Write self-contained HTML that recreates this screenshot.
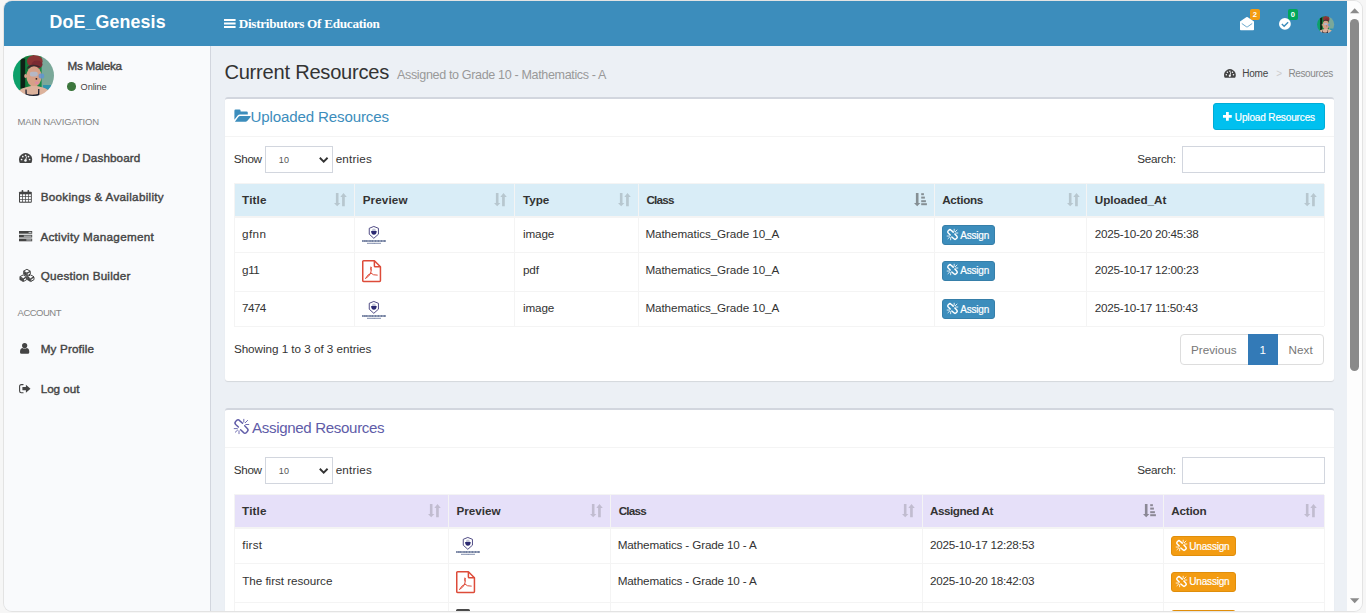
<!DOCTYPE html>
<html lang="en"><head><meta charset="utf-8"><title>DoE_Genesis | Resources</title>
<style>
html,body{margin:0;padding:0;}
body{width:1366px;height:613px;overflow:hidden;background:#f6f6f6;font-family:"Liberation Sans",sans-serif;position:relative;}
#frame{position:absolute;left:0;top:0;width:1366px;height:613px;clip-path:inset(1px 4px 2px 4px round 8px);background:#ecf0f5;}
.a{position:absolute;}
.t{position:absolute;white-space:pre;}
#hdr{left:4px;top:1px;width:1343px;height:45px;background:#3c8dbc;}
#side{left:4px;top:46px;width:206px;height:567px;background:#f9fafc;border-right:1px solid #d2d6de;}
#sbar{left:1347px;top:0;width:16px;height:613px;background:#fdfdfd;}
#edge{left:3px;top:0px;width:1360px;height:612px;border-radius:9px;background:#e3e3e3;}
.box{left:225px;width:1109px;background:#fff;border-top:2.7px solid #d2d6de;border-radius:3px;box-shadow:0 1px 1px rgba(0,0,0,.1);box-sizing:border-box;}
.hl{left:225px;width:1109px;height:1px;background:#f4f4f4;}
.inp{background:#fff;border:1px solid #d2d6de;box-sizing:border-box;}
.th{height:32px;}
.vl{width:1px;background:#f4f4f4;}
.rl{left:234.4px;width:1090px;height:1px;background:#f4f4f4;}
.btn{border-radius:3px;box-sizing:border-box;}
svg{position:absolute;overflow:visible;}
</style></head><body>
<div id="edge" class="a"></div>
<div id="frame">
<div id="hdr" class="a"></div>
<div id="side" class="a"></div>
<div id="sbar" class="a"></div>
<svg class="a" style="left:13.1px;top:54.9px" width="41" height="41" viewBox="0 0 41 41">
<defs><clipPath id="av1"><circle cx="20.5" cy="20.5" r="20.5"/></clipPath><filter id="av1b" x="-10%" y="-10%" width="120%" height="120%"><feGaussianBlur stdDeviation=".55"/></filter></defs>
<g clip-path="url(#av1)"><g filter="url(#av1b)">
<rect x="-2" y="-2" width="45" height="45" fill="#178a45"/>
<rect x="-2" y="-2" width="9" height="45" fill="#0fa06a"/>
<rect x="7.6" y="3.5" width="4.8" height="30" fill="#0b2417"/>
<rect x="12.4" y="-2" width="3" height="36" fill="#127a3a"/>
<rect x="28.6" y="-2" width="15" height="45" fill="#7aa899"/>
<rect x="30" y="30" width="8" height="4.5" fill="#2d93ad"/>
<ellipse cx="21.8" cy="6.2" rx="7.8" ry="6.2" fill="#8b3536"/>
<ellipse cx="24" cy="9.5" rx="5.5" ry="4" fill="#7a2c30"/>
<path d="M13.5 15 Q14 9.5 21 9.8 Q28 10 29 15 L28 12.5 Q21 10.8 14.5 13.5 Z" fill="#3b2a2e"/>
<ellipse cx="21" cy="21.5" rx="7.6" ry="10.3" fill="#d6a087"/>
<ellipse cx="12.6" cy="21" rx="1.4" ry="2" fill="#d9a58c"/>
<path d="M3 43 Q4 33.5 13 32.2 L18 31 L24 31 L30 32.4 Q37 34 38.5 43 Z" fill="#dcb29c"/>
<rect x="16.8" y="16.8" width="8" height="4.6" rx="2" fill="#a9bfd9" opacity=".75"/>
<rect x="25.6" y="18.6" width="5.6" height="5" rx="2" fill="#5d93d6" opacity=".8"/>
<circle cx="23.4" cy="23.8" r=".9" fill="#2a1a1a"/>
<ellipse cx="23.8" cy="27.8" rx="2" ry="1.4" fill="#e08aa0"/>
<path d="M12.4 34.5 L13.6 34.5 L13.8 39 Q19 40.6 25 39 L25.2 34 L26.4 34 L26.3 40.4 Q19 42.4 12.5 40.4 Z" fill="#171a2b"/>
</g></g></svg>
<svg class="a" style="left:1316.6px;top:15.8px" width="17.2" height="17.2" viewBox="0 0 41 41">
<defs><clipPath id="av2"><circle cx="20.5" cy="20.5" r="20.5"/></clipPath><filter id="av2b" x="-10%" y="-10%" width="120%" height="120%"><feGaussianBlur stdDeviation=".55"/></filter></defs>
<g clip-path="url(#av2)"><g filter="url(#av2b)">
<rect x="-2" y="-2" width="45" height="45" fill="#178a45"/>
<rect x="-2" y="-2" width="9" height="45" fill="#0fa06a"/>
<rect x="7.6" y="3.5" width="4.8" height="30" fill="#0b2417"/>
<rect x="12.4" y="-2" width="3" height="36" fill="#127a3a"/>
<rect x="28.6" y="-2" width="15" height="45" fill="#7aa899"/>
<rect x="30" y="30" width="8" height="4.5" fill="#2d93ad"/>
<ellipse cx="21.8" cy="6.2" rx="7.8" ry="6.2" fill="#8b3536"/>
<ellipse cx="24" cy="9.5" rx="5.5" ry="4" fill="#7a2c30"/>
<path d="M13.5 15 Q14 9.5 21 9.8 Q28 10 29 15 L28 12.5 Q21 10.8 14.5 13.5 Z" fill="#3b2a2e"/>
<ellipse cx="21" cy="21.5" rx="7.6" ry="10.3" fill="#d6a087"/>
<ellipse cx="12.6" cy="21" rx="1.4" ry="2" fill="#d9a58c"/>
<path d="M3 43 Q4 33.5 13 32.2 L18 31 L24 31 L30 32.4 Q37 34 38.5 43 Z" fill="#dcb29c"/>
<rect x="16.8" y="16.8" width="8" height="4.6" rx="2" fill="#a9bfd9" opacity=".75"/>
<rect x="25.6" y="18.6" width="5.6" height="5" rx="2" fill="#5d93d6" opacity=".8"/>
<circle cx="23.4" cy="23.8" r=".9" fill="#2a1a1a"/>
<ellipse cx="23.8" cy="27.8" rx="2" ry="1.4" fill="#e08aa0"/>
<path d="M12.4 34.5 L13.6 34.5 L13.8 39 Q19 40.6 25 39 L25.2 34 L26.4 34 L26.3 40.4 Q19 42.4 12.5 40.4 Z" fill="#171a2b"/>
</g></g></svg>
<div class="a" style="left:67px;top:82.1px;width:8.6px;height:8.6px;border-radius:50%;background:#3c763d"></div>
<div class="a " style="left:1250.0px;top:9.0px;width:10.0px;height:11.0px;background:#f39c12;border-radius:2px"></div>
<div class="a " style="left:1288.0px;top:9.0px;width:10.0px;height:11.0px;background:#00a65a;border-radius:2px"></div>
<div class="a box" style="top:97px;height:283.5px"></div>
<div class="a hl" style="top:136px"></div>
<div class="a inp" style="left:265.2px;top:146.2px;width:67.6px;height:26.5px"></div>
<div class="a inp" style="left:1182.1px;top:146.2px;width:142.8px;height:26.5px"></div>
<div class="a box" style="top:408px;height:400px"></div>
<div class="a hl" style="top:447px"></div>
<div class="a inp" style="left:265.2px;top:457.2px;width:67.6px;height:26.5px"></div>
<div class="a inp" style="left:1182.1px;top:457.2px;width:142.8px;height:26.5px"></div>
<div class="a btn" style="left:1213.1px;top:103.3px;width:111.8px;height:26.5px;background:#00c0ef;border:1px solid #00acd6;"></div>
<div class="a " style="left:234.4px;top:183.9px;width:1090.0px;height:31.9px;background:#d9edf7;"></div>
<div class="a " style="left:234.4px;top:215.8px;width:1090.0px;height:1.8px;background:#f4f4f4;"></div>
<div class="a " style="left:233.9px;top:183.9px;width:1.0px;height:142.3px;background:#f4f4f4;"></div>
<div class="a " style="left:354.1px;top:183.9px;width:1.0px;height:142.3px;background:#f4f4f4;"></div>
<div class="a " style="left:513.9px;top:183.9px;width:1.0px;height:142.3px;background:#f4f4f4;"></div>
<div class="a " style="left:637.8px;top:183.9px;width:1.0px;height:142.3px;background:#f4f4f4;"></div>
<div class="a " style="left:933.8px;top:183.9px;width:1.0px;height:142.3px;background:#f4f4f4;"></div>
<div class="a " style="left:1086.0px;top:183.9px;width:1.0px;height:142.3px;background:#f4f4f4;"></div>
<div class="a " style="left:1323.9px;top:183.9px;width:1.0px;height:142.3px;background:#f4f4f4;"></div>
<div class="a " style="left:234.4px;top:251.7px;width:1090.0px;height:1.0px;background:#f4f4f4;"></div>
<div class="a " style="left:234.4px;top:290.8px;width:1090.0px;height:1.0px;background:#f4f4f4;"></div>
<div class="a " style="left:234.4px;top:325.7px;width:1090.0px;height:1.0px;background:#f4f4f4;"></div>
<div class="a " style="left:234.4px;top:182.9px;width:1090.0px;height:1.0px;background:#f4f4f4;"></div>
<div class="a " style="left:234.4px;top:494.9px;width:1090.0px;height:31.9px;background:#e6e0f9;"></div>
<div class="a " style="left:234.4px;top:526.8px;width:1090.0px;height:1.8px;background:#f4f4f4;"></div>
<div class="a " style="left:233.9px;top:494.9px;width:1.0px;height:118.1px;background:#f4f4f4;"></div>
<div class="a " style="left:448.2px;top:494.9px;width:1.0px;height:118.1px;background:#f4f4f4;"></div>
<div class="a " style="left:610.0px;top:494.9px;width:1.0px;height:118.1px;background:#f4f4f4;"></div>
<div class="a " style="left:921.9px;top:494.9px;width:1.0px;height:118.1px;background:#f4f4f4;"></div>
<div class="a " style="left:1162.8px;top:494.9px;width:1.0px;height:118.1px;background:#f4f4f4;"></div>
<div class="a " style="left:1323.9px;top:494.9px;width:1.0px;height:118.1px;background:#f4f4f4;"></div>
<div class="a " style="left:234.4px;top:562.9px;width:1090.0px;height:1.0px;background:#f4f4f4;"></div>
<div class="a " style="left:234.4px;top:602.0px;width:1090.0px;height:1.0px;background:#f4f4f4;"></div>
<div class="a " style="left:234.4px;top:493.9px;width:1090.0px;height:1.0px;background:#f4f4f4;"></div>
<div class="a btn" style="left:942.0px;top:225.0px;width:52.9px;height:19.8px;background:#3c8dbc;border:1px solid #367fa9;"></div>
<div class="a btn" style="left:942.0px;top:261.0px;width:52.9px;height:19.8px;background:#3c8dbc;border:1px solid #367fa9;"></div>
<div class="a btn" style="left:942.0px;top:299.0px;width:52.9px;height:19.8px;background:#3c8dbc;border:1px solid #367fa9;"></div>
<div class="a btn" style="left:1171.1px;top:535.9px;width:64.9px;height:19.9px;background:#f39c12;border:1px solid #e08e0b;"></div>
<div class="a btn" style="left:1171.1px;top:572.0px;width:64.9px;height:19.9px;background:#f39c12;border:1px solid #e08e0b;"></div>
<div class="a btn" style="left:1171.1px;top:610.0px;width:64.9px;height:19.9px;background:#f39c12;border:1px solid #e08e0b;"></div>
<div class="a" style="left:1180.4px;top:334.1px;width:143.2px;height:30.6px;border:1px solid #ddd;border-radius:4px;box-sizing:border-box;background:#fff"></div>
<div class="a " style="left:1248.2px;top:334.1px;width:29.7px;height:30.6px;background:#337ab7;"></div>
<div class="a" style="left:1350px;top:19px;width:9px;height:351.6px;border-radius:4.5px;background:#8a8a8a"></div>
<svg class="a" style="left:1349.9px;top:7.8px" width="9.4" height="5.4" viewBox="0 0 10 5.4"><path d="M0 5.4 L5 0 L10 5.4 Z" fill="#8b8b8b"/></svg>
<svg class="a" style="left:1349.9px;top:598.2px" width="9.4" height="5.4" viewBox="0 0 10 5.4"><path d="M0 0 L5 5.4 L10 0 Z" fill="#8b8b8b"/></svg>
<span class="t" style="left:49.4px;top:14px;font-size:17.8px;line-height:17.8px;font-weight:700;color:#fff;letter-spacing:0.15px;">DoE_Genesis</span>
<span class="t" style="left:238.7px;top:17px;font-size:13.2px;line-height:13.2px;font-weight:700;color:#fff;letter-spacing:-0.287px;font-family:'Liberation Serif', serif;">Distributors Of Education</span>
<span class="t" style="left:1252.7px;top:11px;font-size:7.6px;line-height:7.6px;font-weight:700;color:#fff;letter-spacing:0px;">2</span>
<span class="t" style="left:1290.7px;top:11px;font-size:7.6px;line-height:7.6px;font-weight:700;color:#fff;letter-spacing:0px;">0</span>
<span class="t" style="left:67.5px;top:60px;font-size:11.7px;line-height:11.7px;-webkit-text-stroke:.4px #444;color:#444;letter-spacing:-0.238px;">Ms Maleka</span>
<span class="t" style="left:80.6px;top:83px;font-size:9.2px;line-height:9.2px;color:#444;letter-spacing:-0.1px;">Online</span>
<span class="t" style="left:17.6px;top:117px;font-size:9.5px;line-height:9.5px;color:#848484;letter-spacing:-0.143px;">MAIN NAVIGATION</span>
<span class="t" style="left:40.7px;top:152px;font-size:11.7px;line-height:11.7px;-webkit-text-stroke:.4px #444;color:#444;letter-spacing:0.1px;">Home / Dashboard</span>
<span class="t" style="left:40.7px;top:191px;font-size:11.7px;line-height:11.7px;-webkit-text-stroke:.4px #444;color:#444;letter-spacing:0.286px;">Bookings &amp; Availability</span>
<span class="t" style="left:40.4px;top:231px;font-size:11.7px;line-height:11.7px;-webkit-text-stroke:.4px #444;color:#444;letter-spacing:0.267px;">Activity Management</span>
<span class="t" style="left:40.7px;top:270px;font-size:11.7px;line-height:11.7px;-webkit-text-stroke:.4px #444;color:#444;letter-spacing:0.213px;">Question Builder</span>
<span class="t" style="left:17.6px;top:308px;font-size:9.5px;line-height:9.5px;color:#848484;letter-spacing:-0.517px;">ACCOUNT</span>
<span class="t" style="left:40.7px;top:343px;font-size:11.7px;line-height:11.7px;-webkit-text-stroke:.4px #444;color:#444;letter-spacing:0.144px;">My Profile</span>
<span class="t" style="left:40.7px;top:383px;font-size:11.7px;line-height:11.7px;-webkit-text-stroke:.4px #444;color:#444;letter-spacing:-0.05px;">Log out</span>
<span class="t" style="left:224.4px;top:62px;font-size:20.1px;line-height:20.1px;color:#333;letter-spacing:-0.231px;">Current Resources</span>
<span class="t" style="left:397.0px;top:69px;font-size:12.55px;line-height:12.55px;color:#999;letter-spacing:-0.351px;">Assigned to Grade 10 - Mathematics - A</span>
<span class="t" style="left:1242.3px;top:69px;font-size:10.0px;line-height:10.0px;color:#444;letter-spacing:-0.233px;">Home</span>
<span class="t" style="left:1276.3px;top:69px;font-size:10.0px;line-height:10.0px;color:#ccc;letter-spacing:0px;">&gt;</span>
<span class="t" style="left:1288.4px;top:69px;font-size:10.0px;line-height:10.0px;color:#888;letter-spacing:-0.363px;">Resources</span>
<span class="t" style="left:250.5px;top:109px;font-size:15.1px;line-height:15.1px;color:#3c8dbc;letter-spacing:-0.147px;">Uploaded Resources</span>
<span class="t" style="left:1234.8px;top:113px;font-size:10.0px;line-height:10.0px;-webkit-text-stroke:.2px #fff;color:#fff;letter-spacing:-0.133px;">Upload Resources</span>
<span class="t" style="left:233.8px;top:153px;font-size:11.7px;line-height:11.7px;color:#333;letter-spacing:-0.333px;">Show</span>
<span class="t" style="left:278.8px;top:156px;font-size:9.0px;line-height:9.0px;color:#555;letter-spacing:0.3px;">10</span>
<span class="t" style="left:335.7px;top:153px;font-size:11.7px;line-height:11.7px;color:#333;letter-spacing:0.167px;">entries</span>
<span class="t" style="left:1137.3px;top:153px;font-size:11.7px;line-height:11.7px;color:#333;letter-spacing:-0.267px;">Search:</span>
<span class="t" style="left:242.1px;top:194px;font-size:11.7px;line-height:11.7px;font-weight:700;color:#333;letter-spacing:0.15px;">Title</span>
<span class="t" style="left:362.7px;top:194px;font-size:11.7px;line-height:11.7px;font-weight:700;color:#333;letter-spacing:0.1px;">Preview</span>
<span class="t" style="left:523.0px;top:194px;font-size:11.7px;line-height:11.7px;font-weight:700;color:#333;letter-spacing:-0.033px;">Type</span>
<span class="t" style="left:646.4px;top:194px;font-size:11.7px;line-height:11.7px;font-weight:700;color:#333;letter-spacing:-0.775px;">Class</span>
<span class="t" style="left:942.2px;top:194px;font-size:11.7px;line-height:11.7px;font-weight:700;color:#333;letter-spacing:-0.283px;">Actions</span>
<span class="t" style="left:1094.8px;top:194px;font-size:11.7px;line-height:11.7px;font-weight:700;color:#333;letter-spacing:-0.06px;">Uploaded_At</span>
<span class="t" style="left:242.1px;top:228px;font-size:11.7px;line-height:11.7px;color:#333;letter-spacing:0.367px;">gfnn</span>
<span class="t" style="left:523.0px;top:228px;font-size:11.7px;line-height:11.7px;color:#333;letter-spacing:-0.15px;">image</span>
<span class="t" style="left:645.4px;top:228px;font-size:11.7px;line-height:11.7px;color:#333;letter-spacing:-0.09px;">Mathematics_Grade 10_A</span>
<span class="t" style="left:960.2px;top:231px;font-size:10.0px;line-height:10.0px;-webkit-text-stroke:.2px #fff;color:#fff;letter-spacing:-0.18px;">Assign</span>
<span class="t" style="left:1094.8px;top:228px;font-size:11.7px;line-height:11.7px;color:#333;letter-spacing:-0.25px;">2025-10-20 20:45:38</span>
<span class="t" style="left:242.1px;top:264px;font-size:11.7px;line-height:11.7px;color:#333;letter-spacing:-0.45px;">g11</span>
<span class="t" style="left:523.0px;top:264px;font-size:11.7px;line-height:11.7px;color:#333;letter-spacing:-0.15px;">pdf</span>
<span class="t" style="left:645.4px;top:264px;font-size:11.7px;line-height:11.7px;color:#333;letter-spacing:-0.09px;">Mathematics_Grade 10_A</span>
<span class="t" style="left:960.2px;top:266px;font-size:10.0px;line-height:10.0px;-webkit-text-stroke:.2px #fff;color:#fff;letter-spacing:-0.18px;">Assign</span>
<span class="t" style="left:1094.8px;top:264px;font-size:11.7px;line-height:11.7px;color:#333;letter-spacing:-0.25px;">2025-10-17 12:00:23</span>
<span class="t" style="left:242.1px;top:302px;font-size:11.7px;line-height:11.7px;color:#333;letter-spacing:-0.6px;">7474</span>
<span class="t" style="left:523.0px;top:302px;font-size:11.7px;line-height:11.7px;color:#333;letter-spacing:-0.15px;">image</span>
<span class="t" style="left:645.4px;top:302px;font-size:11.7px;line-height:11.7px;color:#333;letter-spacing:-0.09px;">Mathematics_Grade 10_A</span>
<span class="t" style="left:960.2px;top:305px;font-size:10.0px;line-height:10.0px;-webkit-text-stroke:.2px #fff;color:#fff;letter-spacing:-0.18px;">Assign</span>
<span class="t" style="left:1094.8px;top:302px;font-size:11.7px;line-height:11.7px;color:#333;letter-spacing:-0.25px;">2025-10-17 11:50:43</span>
<span class="t" style="left:233.9px;top:343px;font-size:11.7px;line-height:11.7px;color:#333;letter-spacing:-0.035px;">Showing 1 to 3 of 3 entries</span>
<span class="t" style="left:1191.0px;top:344px;font-size:11.7px;line-height:11.7px;color:#777;letter-spacing:0.0px;">Previous</span>
<span class="t" style="left:1259.5px;top:344px;font-size:11.7px;line-height:11.7px;color:#fff;letter-spacing:0px;">1</span>
<span class="t" style="left:1288.5px;top:344px;font-size:11.7px;line-height:11.7px;color:#777;letter-spacing:0.033px;">Next</span>
<span class="t" style="left:252.0px;top:420px;font-size:15.1px;line-height:15.1px;color:#605ca8;letter-spacing:-0.341px;">Assigned Resources</span>
<span class="t" style="left:233.8px;top:464px;font-size:11.7px;line-height:11.7px;color:#333;letter-spacing:-0.333px;">Show</span>
<span class="t" style="left:278.8px;top:467px;font-size:9.0px;line-height:9.0px;color:#555;letter-spacing:0.3px;">10</span>
<span class="t" style="left:335.7px;top:464px;font-size:11.7px;line-height:11.7px;color:#333;letter-spacing:0.167px;">entries</span>
<span class="t" style="left:1137.3px;top:464px;font-size:11.7px;line-height:11.7px;color:#333;letter-spacing:-0.267px;">Search:</span>
<span class="t" style="left:242.1px;top:505px;font-size:11.7px;line-height:11.7px;font-weight:700;color:#333;letter-spacing:0.15px;">Title</span>
<span class="t" style="left:456.4px;top:505px;font-size:11.7px;line-height:11.7px;font-weight:700;color:#333;letter-spacing:0.017px;">Preview</span>
<span class="t" style="left:618.7px;top:505px;font-size:11.7px;line-height:11.7px;font-weight:700;color:#333;letter-spacing:-0.775px;">Class</span>
<span class="t" style="left:929.9px;top:505px;font-size:11.7px;line-height:11.7px;font-weight:700;color:#333;letter-spacing:-0.43px;">Assigned At</span>
<span class="t" style="left:1171.3px;top:505px;font-size:11.7px;line-height:11.7px;font-weight:700;color:#333;letter-spacing:-0.22px;">Action</span>
<span class="t" style="left:242.2px;top:539px;font-size:11.7px;line-height:11.7px;color:#333;letter-spacing:0.25px;">first</span>
<span class="t" style="left:617.7px;top:539px;font-size:11.7px;line-height:11.7px;color:#333;letter-spacing:-0.152px;">Mathematics - Grade 10 - A</span>
<span class="t" style="left:929.9px;top:539px;font-size:11.7px;line-height:11.7px;color:#333;letter-spacing:-0.222px;">2025-10-17 12:28:53</span>
<span class="t" style="left:1189.3px;top:542px;font-size:10.0px;line-height:10.0px;-webkit-text-stroke:.2px #fff;color:#fff;letter-spacing:-0.186px;">Unassign</span>
<span class="t" style="left:242.2px;top:575px;font-size:11.7px;line-height:11.7px;color:#333;letter-spacing:-0.041px;">The first resource</span>
<span class="t" style="left:617.7px;top:575px;font-size:11.7px;line-height:11.7px;color:#333;letter-spacing:-0.152px;">Mathematics - Grade 10 - A</span>
<span class="t" style="left:929.9px;top:575px;font-size:11.7px;line-height:11.7px;color:#333;letter-spacing:-0.222px;">2025-10-20 18:42:03</span>
<span class="t" style="left:1189.3px;top:577px;font-size:10.0px;line-height:10.0px;-webkit-text-stroke:.2px #fff;color:#fff;letter-spacing:-0.186px;">Unassign</span>
<svg class="a" style="left:224.3px;top:18.9px;" width="11.6" height="9.1" viewBox="0 0 11.6 9.1"><path fill="#fff" d="M0 0h11.6v1.95H0zM0 3.5h11.6v1.95H0zM0 7.1h11.6v1.95H0z"/></svg>
<svg class="a" style="left:1239.8px;top:16.5px;" width="14" height="13.3" viewBox="0 0 14 13.3"><path fill="#fff" d="M0 4.6 L6.2 0.25 Q7 -0.25 7.8 0.25 L14 4.6 V12.5 Q14 13.3 13.2 13.3 H0.8 Q0 13.3 0 12.5 Z"/><path fill="none" stroke="#3c8dbc" stroke-width="0.75" stroke-linecap="round" stroke-linejoin="round" d="M2.1 6.7 L6.3 9.7 Q7 10.2 7.7 9.7 L11.9 6.7"/></svg>
<svg class="a" style="left:1279.1px;top:17.5px;" width="11.8" height="11.8" viewBox="0 0 12 12"><circle cx="6" cy="6" r="6" fill="#fff"/><path fill="none" stroke="#3c8dbc" stroke-width="1.45" d="M2.9 6.2 L5.2 8.4 L9.3 4.2"/></svg>
<svg class="a" style="left:19.4px;top:152.9px;" width="13.2" height="9.9" viewBox="0 0 13.2 9.9"><path fill="#444" d="M0.83 9.9 A6.6 6.6 0 1 1 12.37 9.9 Z"/><g fill="#f9fafc"><circle cx="2.6" cy="6.5" r=".85"/><circle cx="3.8" cy="3.6" r=".85"/><circle cx="6.6" cy="2.4" r=".85"/><circle cx="9.5" cy="3.6" r=".85"/><circle cx="10.6" cy="6.5" r=".85"/><circle cx="6.5" cy="7.6" r="1.25"/><path d="M6.0 7.3 L7.3 3.4 L8.0 3.6 L7.1 7.6 Z"/></g></svg>
<svg class="a" style="left:1223.8px;top:69.1px;" width="11.8" height="8.9" viewBox="0 0 13.2 9.9"><path fill="#444" d="M0.83 9.9 A6.6 6.6 0 1 1 12.37 9.9 Z"/><g fill="#f9fafc"><circle cx="2.6" cy="6.5" r=".85"/><circle cx="3.8" cy="3.6" r=".85"/><circle cx="6.6" cy="2.4" r=".85"/><circle cx="9.5" cy="3.6" r=".85"/><circle cx="10.6" cy="6.5" r=".85"/><circle cx="6.5" cy="7.6" r="1.25"/><path d="M6.0 7.3 L7.3 3.4 L8.0 3.6 L7.1 7.6 Z"/></g></svg>
<svg class="a" style="left:19.4px;top:190.1px;" width="12.8" height="12.7" viewBox="0 0 12.8 12.7"><path fill="#444" d="M0 2.6 Q0 1.7 .9 1.7 H11.9 Q12.8 1.7 12.8 2.6 V11.8 Q12.8 12.7 11.9 12.7 H.9 Q0 12.7 0 11.8 Z"/><rect x="2.6" y="0" width="1.7" height="3.2" rx=".8" fill="#444"/><rect x="8.5" y="0" width="1.7" height="3.2" rx=".8" fill="#444"/><g fill="#f9fafc"><rect x="1.00" y="4.30" width="2.2" height="2.0"/><rect x="1.00" y="7.00" width="2.2" height="2.0"/><rect x="1.00" y="9.70" width="2.2" height="2.0"/><rect x="3.90" y="4.30" width="2.2" height="2.0"/><rect x="3.90" y="7.00" width="2.2" height="2.0"/><rect x="3.90" y="9.70" width="2.2" height="2.0"/><rect x="6.80" y="4.30" width="2.2" height="2.0"/><rect x="6.80" y="7.00" width="2.2" height="2.0"/><rect x="6.80" y="9.70" width="2.2" height="2.0"/><rect x="9.70" y="4.30" width="2.2" height="2.0"/><rect x="9.70" y="7.00" width="2.2" height="2.0"/><rect x="9.70" y="9.70" width="2.2" height="2.0"/></g></svg>
<svg class="a" style="left:19.4px;top:230.7px;" width="13.2" height="10.3" viewBox="0 0 13.2 10.3"><g fill="#444"><rect x="0" y="0" width="13.2" height="2.7"/><rect x="0" y="3.8" width="13.2" height="2.7"/><rect x="0" y="7.6" width="13.2" height="2.7"/></g><g fill="#d0d3d6"><rect x="9.6" y=".85" width="2.8" height="1"/><rect x="4.8" y="4.65" width="7.6" height="1"/><rect x="7.3" y="8.45" width="5.1" height="1"/></g></svg>
<svg class="a" style="left:19.4px;top:269.1px;" width="15.8" height="12.8" viewBox="0 0 15.8 12.8"><path fill="none" stroke="#444" stroke-width="1" stroke-linejoin="round" d="M7.9 0.30000000000000027 L11.3 2.1700000000000004 L7.9 4.040000000000001 L4.5 2.1700000000000004 Z"/><path fill="#444" stroke="#444" stroke-width=".6" stroke-linejoin="round" d="M4.5 2.6200000000000006 L7.65 4.490000000000001 V6.93 L4.5 5.06 Z"/><path fill="none" stroke="#444" stroke-width="1" stroke-linejoin="round" d="M11.3 2.6200000000000006 L8.15 4.490000000000001 V6.93 L11.3 5.06 Z"/><path fill="none" stroke="#444" stroke-width="1" stroke-linejoin="round" d="M4.2 5.9 L7.6 7.7700000000000005 L4.2 9.64 L0.8000000000000003 7.7700000000000005 Z"/><path fill="#444" stroke="#444" stroke-width=".6" stroke-linejoin="round" d="M0.8000000000000003 8.22 L3.95 10.09 V12.530000000000001 L0.8000000000000003 10.66 Z"/><path fill="none" stroke="#444" stroke-width="1" stroke-linejoin="round" d="M7.6 8.22 L4.45 10.09 V12.530000000000001 L7.6 10.66 Z"/><path fill="none" stroke="#444" stroke-width="1" stroke-linejoin="round" d="M11.6 5.9 L15.0 7.7700000000000005 L11.6 9.64 L8.2 7.7700000000000005 Z"/><path fill="#444" stroke="#444" stroke-width=".6" stroke-linejoin="round" d="M8.2 8.22 L11.35 10.09 V12.530000000000001 L8.2 10.66 Z"/><path fill="none" stroke="#444" stroke-width="1" stroke-linejoin="round" d="M15.0 8.22 L11.85 10.09 V12.530000000000001 L15.0 10.66 Z"/></svg>
<svg class="a" style="left:19.7px;top:342.9px;" width="9.3" height="10.8" viewBox="0 0 9.3 10.8"><circle cx="4.65" cy="2.6" r="2.6" fill="#444"/><path fill="#444" d="M0 9.2 Q0 5.2 2.3 4.9 Q4.65 6.3 7 4.9 Q9.3 5.2 9.3 9.2 Q9.3 10.8 7.7 10.8 H1.6 Q0 10.8 0 9.2 Z"/></svg>
<svg class="a" style="left:19.4px;top:383.6px;" width="11.6" height="9.4" viewBox="0 0 11.6 9.4"><path fill="none" stroke="#444" stroke-width="1.1" stroke-linecap="round" d="M4.1 .6 H2.3 Q.6 .6 .6 2.3 V7.1 Q.6 8.8 2.3 8.8 H4.1"/><path fill="#444" d="M3.4 3.1 H6.9 V.7 L11.5 4.7 L6.9 8.7 V6.3 H3.4 Z"/></svg>
<svg class="a" style="left:233.5px;top:109.1px;" width="16.9" height="12.8" viewBox="0 0 16.9 12.8"><path fill="#3c8dbc" d="M.4 10.7 V1.7 Q.4 .5 1.6 .5 H5.4 Q6.6 .5 6.6 1.7 V2.4 H12.6 Q13.8 2.4 13.8 3.6 V5.5 H6 Q4.6 5.5 3.7 6.6 Z"/><path fill="#3c8dbc" d="M.9 12.8 L4.3 8 Q5 7.1 6 7.1 H16.2 Q17.3 7.1 16.6 8 L13.2 12 Q12.5 12.8 11.6 12.8 Z"/></svg>
<svg class="a" style="left:1223.0px;top:112.2px;" width="8.8" height="8.8" viewBox="0 0 8.8 8.8"><path fill="#fff" d="M3 0 H5.8 V3 H8.8 V5.8 H5.8 V8.8 H3 V5.8 H0 V3 H3 Z"/></svg>
<svg class="a" style="left:233.5px;top:419.2px;" width="15" height="15" viewBox="0 0 15 15"><g fill="none" stroke="#605ca8" stroke-linecap="round" stroke-linejoin="round"><path stroke-width="1.45" d="M4.4 8.1 L1.7 5.5 A2.2 2.2 0 0 1 1.7 2.4 L2.5 1.6 A2.2 2.2 0 0 1 5.6 1.6 L8.5 4.3"/><path stroke-width="1.45" d="M10.7 6.8 L13.3 9.5 A2.2 2.2 0 0 1 13.3 12.6 L12.5 13.4 A2.2 2.2 0 0 1 9.4 13.4 L6.6 10.8"/><path stroke-width="0.9" d="M9.8 .3 V3.2 M13.6 1.4 L11.3 3.7 M11.8 5.5 H14.8 M.2 9.6 H3.3 M1.3 13.2 L3.6 11.1 M5 11.8 V14.7"/></g></svg>
<svg class="a" style="left:947.4px;top:229.0px;" width="11" height="11" viewBox="0 0 15 15"><g fill="none" stroke="#fff" stroke-linecap="round" stroke-linejoin="round"><path stroke-width="2.0" d="M4.4 8.1 L1.7 5.5 A2.2 2.2 0 0 1 1.7 2.4 L2.5 1.6 A2.2 2.2 0 0 1 5.6 1.6 L8.5 4.3"/><path stroke-width="2.0" d="M10.7 6.8 L13.3 9.5 A2.2 2.2 0 0 1 13.3 12.6 L12.5 13.4 A2.2 2.2 0 0 1 9.4 13.4 L6.6 10.8"/><path stroke-width="1.15" d="M9.8 .3 V3.2 M13.6 1.4 L11.3 3.7 M11.8 5.5 H14.8 M.2 9.6 H3.3 M1.3 13.2 L3.6 11.1 M5 11.8 V14.7"/></g></svg>
<svg class="a" style="left:947.4px;top:264.1px;" width="11" height="11" viewBox="0 0 15 15"><g fill="none" stroke="#fff" stroke-linecap="round" stroke-linejoin="round"><path stroke-width="2.0" d="M4.4 8.1 L1.7 5.5 A2.2 2.2 0 0 1 1.7 2.4 L2.5 1.6 A2.2 2.2 0 0 1 5.6 1.6 L8.5 4.3"/><path stroke-width="2.0" d="M10.7 6.8 L13.3 9.5 A2.2 2.2 0 0 1 13.3 12.6 L12.5 13.4 A2.2 2.2 0 0 1 9.4 13.4 L6.6 10.8"/><path stroke-width="1.15" d="M9.8 .3 V3.2 M13.6 1.4 L11.3 3.7 M11.8 5.5 H14.8 M.2 9.6 H3.3 M1.3 13.2 L3.6 11.1 M5 11.8 V14.7"/></g></svg>
<svg class="a" style="left:947.4px;top:303.0px;" width="11" height="11" viewBox="0 0 15 15"><g fill="none" stroke="#fff" stroke-linecap="round" stroke-linejoin="round"><path stroke-width="2.0" d="M4.4 8.1 L1.7 5.5 A2.2 2.2 0 0 1 1.7 2.4 L2.5 1.6 A2.2 2.2 0 0 1 5.6 1.6 L8.5 4.3"/><path stroke-width="2.0" d="M10.7 6.8 L13.3 9.5 A2.2 2.2 0 0 1 13.3 12.6 L12.5 13.4 A2.2 2.2 0 0 1 9.4 13.4 L6.6 10.8"/><path stroke-width="1.15" d="M9.8 .3 V3.2 M13.6 1.4 L11.3 3.7 M11.8 5.5 H14.8 M.2 9.6 H3.3 M1.3 13.2 L3.6 11.1 M5 11.8 V14.7"/></g></svg>
<svg class="a" style="left:1176.3px;top:540.3px;" width="11" height="11" viewBox="0 0 15 15"><g fill="none" stroke="#fff" stroke-linecap="round" stroke-linejoin="round"><path stroke-width="2.0" d="M4.4 8.1 L1.7 5.5 A2.2 2.2 0 0 1 1.7 2.4 L2.5 1.6 A2.2 2.2 0 0 1 5.6 1.6 L8.5 4.3"/><path stroke-width="2.0" d="M10.7 6.8 L13.3 9.5 A2.2 2.2 0 0 1 13.3 12.6 L12.5 13.4 A2.2 2.2 0 0 1 9.4 13.4 L6.6 10.8"/><path stroke-width="1.15" d="M9.8 .3 V3.2 M13.6 1.4 L11.3 3.7 M11.8 5.5 H14.8 M.2 9.6 H3.3 M1.3 13.2 L3.6 11.1 M5 11.8 V14.7"/></g></svg>
<svg class="a" style="left:1176.3px;top:575.7px;" width="11" height="11" viewBox="0 0 15 15"><g fill="none" stroke="#fff" stroke-linecap="round" stroke-linejoin="round"><path stroke-width="2.0" d="M4.4 8.1 L1.7 5.5 A2.2 2.2 0 0 1 1.7 2.4 L2.5 1.6 A2.2 2.2 0 0 1 5.6 1.6 L8.5 4.3"/><path stroke-width="2.0" d="M10.7 6.8 L13.3 9.5 A2.2 2.2 0 0 1 13.3 12.6 L12.5 13.4 A2.2 2.2 0 0 1 9.4 13.4 L6.6 10.8"/><path stroke-width="1.15" d="M9.8 .3 V3.2 M13.6 1.4 L11.3 3.7 M11.8 5.5 H14.8 M.2 9.6 H3.3 M1.3 13.2 L3.6 11.1 M5 11.8 V14.7"/></g></svg>
<svg class="a" style="left:1176.3px;top:614.0px;" width="11" height="11" viewBox="0 0 15 15"><g fill="none" stroke="#fff" stroke-linecap="round" stroke-linejoin="round"><path stroke-width="2.0" d="M4.4 8.1 L1.7 5.5 A2.2 2.2 0 0 1 1.7 2.4 L2.5 1.6 A2.2 2.2 0 0 1 5.6 1.6 L8.5 4.3"/><path stroke-width="2.0" d="M10.7 6.8 L13.3 9.5 A2.2 2.2 0 0 1 13.3 12.6 L12.5 13.4 A2.2 2.2 0 0 1 9.4 13.4 L6.6 10.8"/><path stroke-width="1.15" d="M9.8 .3 V3.2 M13.6 1.4 L11.3 3.7 M11.8 5.5 H14.8 M.2 9.6 H3.3 M1.3 13.2 L3.6 11.1 M5 11.8 V14.7"/></g></svg>
<svg class="a" style="left:334.2px;top:192.8px;" width="12.8" height="13.3" viewBox="0 0 12.8 13.3"><g fill="#333" opacity=".2"><path d="M1.9 0 H4.5 V10 H6.4 L3.2 13.3 L0 10 H1.9 Z"/><path d="M8.1 13.3 H10.8 V3.9 H12.8 L9.5 0 L6.3 3.9 H8.1 Z"/></g></svg>
<svg class="a" style="left:494.0px;top:192.8px;" width="12.8" height="13.3" viewBox="0 0 12.8 13.3"><g fill="#333" opacity=".2"><path d="M1.9 0 H4.5 V10 H6.4 L3.2 13.3 L0 10 H1.9 Z"/><path d="M8.1 13.3 H10.8 V3.9 H12.8 L9.5 0 L6.3 3.9 H8.1 Z"/></g></svg>
<svg class="a" style="left:618.1px;top:192.8px;" width="12.8" height="13.3" viewBox="0 0 12.8 13.3"><g fill="#333" opacity=".2"><path d="M1.9 0 H4.5 V10 H6.4 L3.2 13.3 L0 10 H1.9 Z"/><path d="M8.1 13.3 H10.8 V3.9 H12.8 L9.5 0 L6.3 3.9 H8.1 Z"/></g></svg>
<svg class="a" style="left:1066.5px;top:192.8px;" width="12.8" height="13.3" viewBox="0 0 12.8 13.3"><g fill="#333" opacity=".2"><path d="M1.9 0 H4.5 V10 H6.4 L3.2 13.3 L0 10 H1.9 Z"/><path d="M8.1 13.3 H10.8 V3.9 H12.8 L9.5 0 L6.3 3.9 H8.1 Z"/></g></svg>
<svg class="a" style="left:1303.8px;top:192.8px;" width="12.8" height="13.3" viewBox="0 0 12.8 13.3"><g fill="#333" opacity=".2"><path d="M1.9 0 H4.5 V10 H6.4 L3.2 13.3 L0 10 H1.9 Z"/><path d="M8.1 13.3 H10.8 V3.9 H12.8 L9.5 0 L6.3 3.9 H8.1 Z"/></g></svg>
<svg class="a" style="left:914.2px;top:192.8px;" width="12.8" height="13.3" viewBox="0 0 12.8 13.3"><g fill="#333" opacity=".5"><path d="M1.9 0 H4.5 V10 H6.4 L3.2 13.3 L0 10 H1.9 Z"/><rect x="7.2" y=".2" width="2.7" height="2"/><rect x="7.2" y="3.6" width="3.7" height="2"/><rect x="7.2" y="7.2" width="4.7" height="2"/><rect x="7.2" y="10.2" width="5.7" height="2"/></g></svg>
<svg class="a" style="left:428.2px;top:503.8px;" width="12.8" height="13.3" viewBox="0 0 12.8 13.3"><g fill="#333" opacity=".2"><path d="M1.9 0 H4.5 V10 H6.4 L3.2 13.3 L0 10 H1.9 Z"/><path d="M8.1 13.3 H10.8 V3.9 H12.8 L9.5 0 L6.3 3.9 H8.1 Z"/></g></svg>
<svg class="a" style="left:590.1px;top:503.8px;" width="12.8" height="13.3" viewBox="0 0 12.8 13.3"><g fill="#333" opacity=".2"><path d="M1.9 0 H4.5 V10 H6.4 L3.2 13.3 L0 10 H1.9 Z"/><path d="M8.1 13.3 H10.8 V3.9 H12.8 L9.5 0 L6.3 3.9 H8.1 Z"/></g></svg>
<svg class="a" style="left:902.0px;top:503.8px;" width="12.8" height="13.3" viewBox="0 0 12.8 13.3"><g fill="#333" opacity=".2"><path d="M1.9 0 H4.5 V10 H6.4 L3.2 13.3 L0 10 H1.9 Z"/><path d="M8.1 13.3 H10.8 V3.9 H12.8 L9.5 0 L6.3 3.9 H8.1 Z"/></g></svg>
<svg class="a" style="left:1303.8px;top:503.8px;" width="12.8" height="13.3" viewBox="0 0 12.8 13.3"><g fill="#333" opacity=".2"><path d="M1.9 0 H4.5 V10 H6.4 L3.2 13.3 L0 10 H1.9 Z"/><path d="M8.1 13.3 H10.8 V3.9 H12.8 L9.5 0 L6.3 3.9 H8.1 Z"/></g></svg>
<svg class="a" style="left:1143.4px;top:503.8px;" width="12.8" height="13.3" viewBox="0 0 12.8 13.3"><g fill="#333" opacity=".5"><path d="M1.9 0 H4.5 V10 H6.4 L3.2 13.3 L0 10 H1.9 Z"/><rect x="7.2" y=".2" width="2.7" height="2"/><rect x="7.2" y="3.6" width="3.7" height="2"/><rect x="7.2" y="7.2" width="4.7" height="2"/><rect x="7.2" y="10.2" width="5.7" height="2"/></g></svg>
<svg class="a" style="left:319.2px;top:156.6px;" width="9.4" height="5.8" viewBox="0 0 9.4 5.8"><path fill="none" stroke="#333" stroke-width="1.9" d="M.8 .8 L4.7 4.6 L8.6 .8"/></svg>
<svg class="a" style="left:319.2px;top:467.6px;" width="9.4" height="5.8" viewBox="0 0 9.4 5.8"><path fill="none" stroke="#333" stroke-width="1.9" d="M.8 .8 L4.7 4.6 L8.6 .8"/></svg>
<svg class="a" style="left:362.0px;top:260.0px;" width="19.2" height="22.2" viewBox="0 0 19.2 22.2"><g fill="none" stroke="#dd4b39" stroke-linejoin="round"><path stroke-width="1.5" d="M1.6 .75 H12.4 L18.45 6.8 V20.6 Q18.45 21.45 17.6 21.45 H1.6 Q.75 21.45 .75 20.6 V1.6 Q.75 .75 1.6 .75 Z"/><path stroke-width="1.5" d="M12.4 .9 V6 Q12.4 6.8 13.2 6.8 H18.3"/><path stroke-width="1" stroke-linecap="round" d="M8.9 7 Q10 9.5 8.7 13 Q7 16.8 3.9 18.2 M8.7 13 Q11 15.6 15.3 15.2 M8.7 13.4 Q5.5 14.3 3.6 18.4 M9.2 7.2 Q8.2 7.6 8.8 10"/></g></svg>
<svg class="a" style="left:455.9px;top:571.0px;" width="19.2" height="22.2" viewBox="0 0 19.2 22.2"><g fill="none" stroke="#dd4b39" stroke-linejoin="round"><path stroke-width="1.5" d="M1.6 .75 H12.4 L18.45 6.8 V20.6 Q18.45 21.45 17.6 21.45 H1.6 Q.75 21.45 .75 20.6 V1.6 Q.75 .75 1.6 .75 Z"/><path stroke-width="1.5" d="M12.4 .9 V6 Q12.4 6.8 13.2 6.8 H18.3"/><path stroke-width="1" stroke-linecap="round" d="M8.9 7 Q10 9.5 8.7 13 Q7 16.8 3.9 18.2 M8.7 13 Q11 15.6 15.3 15.2 M8.7 13.4 Q5.5 14.3 3.6 18.4 M9.2 7.2 Q8.2 7.6 8.8 10"/></g></svg>
<svg class="a" style="left:362.1px;top:226.1px;" width="24" height="18" viewBox="0 0 24 18"><path fill="#fff" stroke="#332f70" stroke-opacity=".9" stroke-width=".95" stroke-linejoin="round" d="M11.8 .45 L16.45 2.3 V8.2 L11.8 12.3 L7.25 8.2 V2.3 Z"/><ellipse cx="11.9" cy="4.3" rx="1.9" ry="1.7" fill="#c3c5d6"/><path fill="#2c2a72" d="M9.1 5 H14.7 Q14.7 8.7 11.9 8.7 Q9.1 8.7 9.1 5 Z"/><path fill="none" stroke="#3a4d7a" stroke-width="1.7" stroke-dasharray="1.5 .25 1.1 .2 1.8 .25 .9 .25" stroke-opacity=".95" d="M.1 15 H24"/><path fill="none" stroke="#5d6d95" stroke-width="1.1" stroke-dasharray="1 .25 .8 .25" stroke-opacity=".8" d="M5.2 17.4 H19"/></svg>
<svg class="a" style="left:362.1px;top:300.6px;" width="24" height="18" viewBox="0 0 24 18"><path fill="#fff" stroke="#332f70" stroke-opacity=".9" stroke-width=".95" stroke-linejoin="round" d="M11.8 .45 L16.45 2.3 V8.2 L11.8 12.3 L7.25 8.2 V2.3 Z"/><ellipse cx="11.9" cy="4.3" rx="1.9" ry="1.7" fill="#c3c5d6"/><path fill="#2c2a72" d="M9.1 5 H14.7 Q14.7 8.7 11.9 8.7 Q9.1 8.7 9.1 5 Z"/><path fill="none" stroke="#3a4d7a" stroke-width="1.7" stroke-dasharray="1.5 .25 1.1 .2 1.8 .25 .9 .25" stroke-opacity=".95" d="M.1 15 H24"/><path fill="none" stroke="#5d6d95" stroke-width="1.1" stroke-dasharray="1 .25 .8 .25" stroke-opacity=".8" d="M5.2 17.4 H19"/></svg>
<svg class="a" style="left:456.0px;top:537.1px;" width="24" height="18" viewBox="0 0 24 18"><path fill="#fff" stroke="#332f70" stroke-opacity=".9" stroke-width=".95" stroke-linejoin="round" d="M11.8 .45 L16.45 2.3 V8.2 L11.8 12.3 L7.25 8.2 V2.3 Z"/><ellipse cx="11.9" cy="4.3" rx="1.9" ry="1.7" fill="#c3c5d6"/><path fill="#2c2a72" d="M9.1 5 H14.7 Q14.7 8.7 11.9 8.7 Q9.1 8.7 9.1 5 Z"/><path fill="none" stroke="#3a4d7a" stroke-width="1.7" stroke-dasharray="1.5 .25 1.1 .2 1.8 .25 .9 .25" stroke-opacity=".95" d="M.1 15 H24"/><path fill="none" stroke="#5d6d95" stroke-width="1.1" stroke-dasharray="1 .25 .8 .25" stroke-opacity=".8" d="M5.2 17.4 H19"/></svg>
<div class="a" style="left:455.9px;top:609.2px;width:14px;height:6px;background:#4a4a4a;border-radius:1.5px 1.5px 0 0"></div>
</div>
</body></html>
